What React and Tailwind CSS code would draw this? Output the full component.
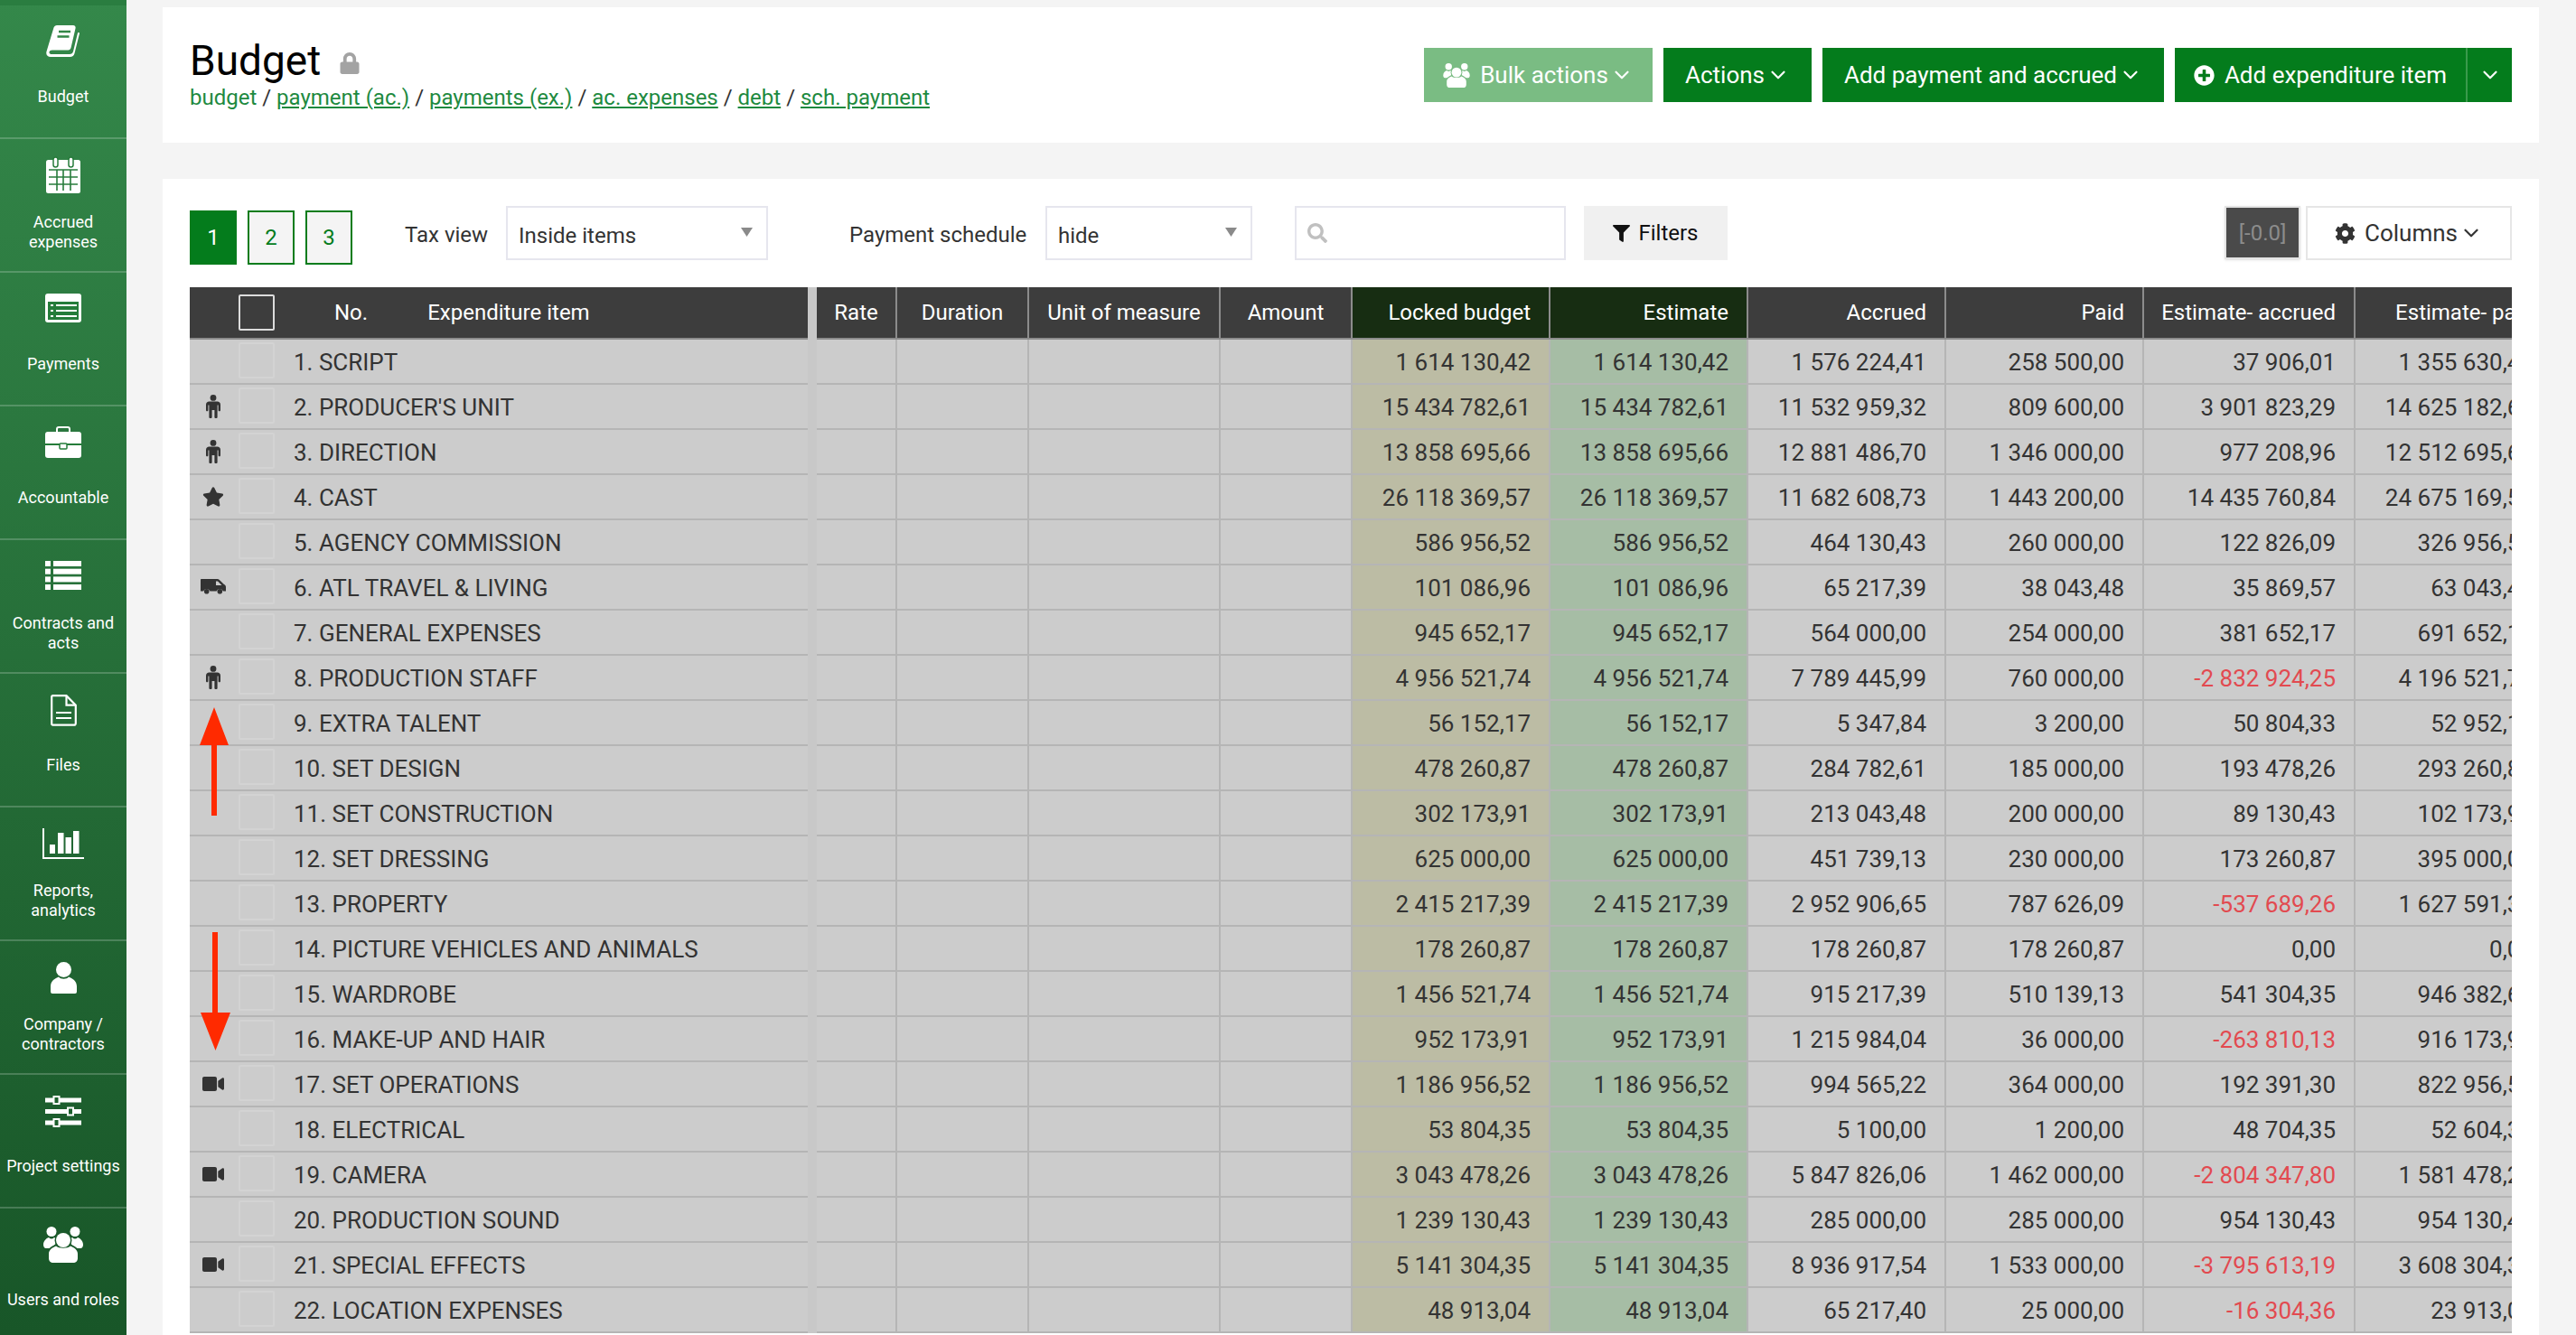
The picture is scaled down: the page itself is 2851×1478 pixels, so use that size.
import React from "react";
import { ChevronDown } from "lucide-react";
import { FaCog, FaFilter, FaLock, FaPlusCircle, FaSearch, FaStar, FaVideo } from "react-icons/fa";

const BookIcon = () => (
  <svg width="38" height="35" viewBox="0 0 38 35" fill="none">
    <path d="M8.5 2.5C9 1 10.5 0 12 0h18c2 0 3 1.5 2.5 3.5L27.5 25c-.5 1.5-1.5 2.5-3 2.5H7c-2.5 0-3.5 1-3.5 2.5S4.5 32 7 32h19c2 0 3.500-1 4-3l5-20.500c.2-.8 2.200-.5 2 .5L31.500 31c-.5 2.500-2.500 4-5 4H5c-3.500 0-5.500-2.500-4.500-6Z" fill="#fff" />
    <path d="M14 7h13M12.500 12.500h13" stroke="#338646" strokeWidth="2.500" />
  </svg>
);

const CalendarIcon = () => (
  <svg width="38" height="41" viewBox="0 0 38 41" fill="none">
    <rect x="0" y="4" width="38" height="37" rx="2.500" fill="#fff" />
    <path d="M3 15h32M3 23h32M3 31h32M12 15v23M19 15v23M27 15v23" stroke="#287c3c" strokeWidth="1.600" />
    <rect x="8" y="1" width="5" height="11" rx="2.500" fill="#fff" stroke="#287c3c" strokeWidth="1.500" />
    <rect x="25" y="1" width="5" height="11" rx="2.500" fill="#fff" stroke="#287c3c" strokeWidth="1.500" />
  </svg>
);

const PaymentsIcon = () => (
  <svg width="40" height="32" viewBox="0 0 40 32" fill="none">
    <rect width="40" height="32" rx="3" fill="#fff" />
    <rect x="3" y="9" width="34" height="20" fill="#257c3a" />
    <path d="M6 13h3M12 13h23M6 19h3M12 19h23M6 25h3M12 25h23" stroke="#fff" strokeWidth="2.200" />
  </svg>
);

const BriefcaseIcon = () => (
  <svg width="40" height="35" viewBox="0 0 40 35" fill="none">
    <rect x="13" y="1" width="14" height="8" rx="2" stroke="#fff" strokeWidth="2" />
    <rect y="6" width="40" height="29" rx="3" fill="#fff" />
    <rect y="19" width="40" height="2" fill="#257c3a" />
    <rect x="16" y="19" width="8" height="6" rx="1" fill="#fff" stroke="#257c3a" strokeWidth="1.500" />
  </svg>
);

const ListIcon = () => (
  <svg width="40" height="32" viewBox="0 0 40 32" fill="#fff">
    <rect y="0" width="6" height="6" />
    <rect x="9" y="0" width="31" height="6" />
    <rect y="8.700" width="6" height="6" />
    <rect x="9" y="8.700" width="31" height="6" />
    <rect y="17.400" width="6" height="6" />
    <rect x="9" y="17.400" width="31" height="6" />
    <rect y="26" width="6" height="6" />
    <rect x="9" y="26" width="31" height="6" />
  </svg>
);

const FileIcon = () => (
  <svg width="29" height="35" viewBox="0 0 29 35" fill="none" stroke="#fff" strokeWidth="2.200">
    <path d="M2.500 1.200h15l10.300 10.500v20c0 1.200-.8 2-2 2H2.500c-.8 0-1.300-.6-1.300-1.500V2.700c0-.9.500-1.500 1.300-1.500Z" />
    <path d="M17.500 1.200v10.500h10.300M6 20h17M6 26h17" />
  </svg>
);

const ChartIcon = () => (
  <svg width="46" height="35" viewBox="0 0 46 35" fill="#fff">
    <path d="M0 0h2v32h44v2H0Z" />
    <rect x="8" y="18" width="6" height="10" />
    <rect x="17" y="5" width="6.500" height="23" />
    <rect x="25.500" y="10" width="6.500" height="18" />
    <rect x="34" y="3" width="6.500" height="25" />
  </svg>
);

const UserIcon = () => (
  <svg width="29" height="35" viewBox="0 0 29 35" fill="#fff">
    <circle cx="14.500" cy="8.500" r="8.500" />
    <path d="M0 33V27C0 21 5 18 9 16.500C11 19.500 18 19.500 20 16.500C24 18 29 21 29 27V33Q29 35 27 35H2Q0 35 0 33Z" />
  </svg>
);

const SlidersIcon = () => (
  <svg width="40" height="35" viewBox="0 0 40 35">
    <path d="M0 5h40M0 17.500h40M0 30h40" stroke="#fff" strokeWidth="5" />
    <rect x="9.500" y="1" width="6" height="8" fill="#1c602c" stroke="#fff" strokeWidth="2" />
    <rect x="25" y="13.500" width="6" height="8" fill="#1c602c" stroke="#fff" strokeWidth="2" />
    <rect x="9.500" y="26" width="6" height="8" fill="#1c602c" stroke="#fff" strokeWidth="2" />
  </svg>
);

// three heads, the middle person sits on top of the two behind
const UsersIcon = ({ w = 44, h = 40, id = "u" }) => (
  <svg width={w} height={h} viewBox="0 0 44 40" fill="currentColor">
    <mask id={id}>
      <rect width="44" height="40" fill="#fff" />
      <circle cx="22" cy="15" r="9.500" fill="#000" />
      <path d="M4 40V30C4 24 10 21 14 20h16c4 1 10 4 10 10v10Z" fill="#000" />
    </mask>
    <g mask={`url(#${id})`}>
      <circle cx="9" cy="5.500" r="5.500" />
      <circle cx="35" cy="5.500" r="5.500" />
      <path d="M0 20c0-4 3-7 6-8 2 2 4 2 6 0 2 1 4 3 4 5l-8 7H3c-2 0-3-2-3-4Z" />
      <path d="M44 20c0-4-3-7-6-8-2 2-4 2-6 0-2 1-4 3-4 5l8 7h5c2 0 3-2 3-4Z" />
    </g>
    <circle cx="22" cy="15" r="8" />
    <path d="M6 35v-5c0-4 4-7 8-8.500 3 3 13 3 16 0 4 1.500 8 4.500 8 8.500v5c0 3-2 5-5 5H11c-3 0-5-2-5-5Z" />
  </svg>
);

const MaleIcon = () => (
  <svg width="16" height="26" viewBox="0 0 16 26" fill="#333">
    <circle cx="8" cy="3.400" r="3.400" />
    <path d="M3.500 7.500h9c2 0 3.500 1.500 3.500 3.500v6c0 .8-.5 1.300-1.200 1.300S13.600 17.800 13.600 17v-5.500h-1V25c0 .7-.7 1-1.600 1s-1.600-.3-1.600-1V17H6.600v8c0 .7-.7 1-1.600 1s-1.600-.3-1.600-1V11.500h-1V17c0 .8-.5 1.300-1.200 1.300S0 17.800 0 17v-6c0-2 1.500-3.500 3.500-3.500Z" />
  </svg>
);

const VanIcon = () => (
  <svg width="28" height="17" viewBox="0 0 28 17" fill="#333">
    <path fillRule="evenodd" d="M1 0h17.500c1 0 1.700.4 2.300 1L26 6c1.300.6 2 1.600 2 3v4.500h-3a4 4 0 0 0-7.500 0h-7a4 4 0 0 0-7.500 0H0V1c0-.6.400-1 1-1Zm16 2.500V7h6.500l-4.500-4.500Z" />
    <circle cx="6.700" cy="13.800" r="2.800" />
    <circle cx="21.300" cy="13.800" r="2.800" />
  </svg>
);

const navItems = [
  { label: "Budget", icon: <BookIcon />, gap: "mt-[6px]" },
  { label: "Accrued expenses", icon: <CalendarIcon />, gap: "mt-[8px]" },
  { label: "Payments", icon: <PaymentsIcon />, gap: "mt-[6px]" },
  { label: "Accountable", icon: <BriefcaseIcon />, gap: "mt-[6px]" },
  { label: "Contracts and acts", icon: <ListIcon />, gap: "mt-[8px]" },
  { label: "Files", icon: <FileIcon />, gap: "mt-[6px]", nudge: "mt-[3px]" },
  { label: "Reports, analytics", icon: <ChartIcon />, gap: "mt-[8px]", nudge: "mt-[2px]" },
  { label: "Company / contractors", icon: <UserIcon />, gap: "mt-[8px]", nudge: "mt-[2px]" },
  { label: "Project settings", icon: <SlidersIcon />, gap: "mt-[6px]", nudge: "mt-[2px]" },
  { label: "Users and roles", icon: <UsersIcon id="nav-users" />, gap: "mt-[6px]", nudge: "mt-[2px]" },
];

const columns = [
  { title: "Rate", w: "w-[89px]", align: "justify-center" },
  { title: "Duration", w: "w-[146px]", align: "justify-center" },
  { title: "Unit of measure", w: "w-[212px]", align: "justify-center" },
  { title: "Amount", w: "w-[146px]", align: "justify-center" },
  { title: "Locked budget", w: "w-[219px]", align: "justify-end", head: "bg-[#172d12]", cell: "bg-[#bcbca4]" },
  { title: "Estimate", w: "w-[219px]", align: "justify-end", head: "bg-[#172d12]", cell: "bg-[#a6bda5]" },
  { title: "Accrued", w: "w-[219px]", align: "justify-end" },
  { title: "Paid", w: "w-[219px]", align: "justify-end" },
  { title: "Estimate- accrued", w: "w-[234px]", align: "justify-end" },
  { title: "Estimate- paid", w: "w-[219px]", align: "justify-end" },
];

const male = <MaleIcon />;
const video = <FaVideo size={24} />;

// name, icon, estimate, accrued, paid, estimate-accrued, estimate-paid
const rows = [
  ["1. SCRIPT", null, "1 614 130,42", "1 576 224,41", "258 500,00", "37 906,01", "1 355 630,42"],
  ["2. PRODUCER'S UNIT", male, "15 434 782,61", "11 532 959,32", "809 600,00", "3 901 823,29", "14 625 182,61"],
  ["3. DIRECTION", male, "13 858 695,66", "12 881 486,70", "1 346 000,00", "977 208,96", "12 512 695,66"],
  ["4. CAST", <FaStar size={24} />, "26 118 369,57", "11 682 608,73", "1 443 200,00", "14 435 760,84", "24 675 169,57"],
  ["5. AGENCY COMMISSION", null, "586 956,52", "464 130,43", "260 000,00", "122 826,09", "326 956,52"],
  ["6. ATL TRAVEL & LIVING", <VanIcon />, "101 086,96", "65 217,39", "38 043,48", "35 869,57", "63 043,48"],
  ["7. GENERAL EXPENSES", null, "945 652,17", "564 000,00", "254 000,00", "381 652,17", "691 652,17"],
  ["8. PRODUCTION STAFF", male, "4 956 521,74", "7 789 445,99", "760 000,00", "-2 832 924,25", "4 196 521,74"],
  ["9. EXTRA TALENT", null, "56 152,17", "5 347,84", "3 200,00", "50 804,33", "52 952,17"],
  ["10. SET DESIGN", null, "478 260,87", "284 782,61", "185 000,00", "193 478,26", "293 260,87"],
  ["11. SET CONSTRUCTION", null, "302 173,91", "213 043,48", "200 000,00", "89 130,43", "102 173,91"],
  ["12. SET DRESSING", null, "625 000,00", "451 739,13", "230 000,00", "173 260,87", "395 000,00"],
  ["13. PROPERTY", null, "2 415 217,39", "2 952 906,65", "787 626,09", "-537 689,26", "1 627 591,30"],
  ["14. PICTURE VEHICLES AND ANIMALS", null, "178 260,87", "178 260,87", "178 260,87", "0,00", "0,00"],
  ["15. WARDROBE", null, "1 456 521,74", "915 217,39", "510 139,13", "541 304,35", "946 382,61"],
  ["16. MAKE-UP AND HAIR", null, "952 173,91", "1 215 984,04", "36 000,00", "-263 810,13", "916 173,91"],
  ["17. SET OPERATIONS", video, "1 186 956,52", "994 565,22", "364 000,00", "192 391,30", "822 956,52"],
  ["18. ELECTRICAL", null, "53 804,35", "5 100,00", "1 200,00", "48 704,35", "52 604,35"],
  ["19. CAMERA", video, "3 043 478,26", "5 847 826,06", "1 462 000,00", "-2 804 347,80", "1 581 478,26"],
  ["20. PRODUCTION SOUND", null, "1 239 130,43", "285 000,00", "285 000,00", "954 130,43", "954 130,43"],
  ["21. SPECIAL EFFECTS", video, "5 141 304,35", "8 936 917,54", "1 533 000,00", "-3 795 613,19", "3 608 304,35"],
  ["22. LOCATION EXPENSES", null, "48 913,04", "65 217,40", "25 000,00", "-16 304,36", "23 913,04"],
];

const Sidebar = () => (
  <aside className="w-[140px] shrink-0 h-full overflow-hidden text-white bg-gradient-to-b from-[#34884a] to-[#185628]">
    <div className="h-[6px] bg-[#2a7d40]" />
    {navItems.map((item) => (
      <div key={item.label} className="h-[148px] border-b-2 border-white/20 flex flex-col items-center pt-[14px]">
        <div className="h-[50px] flex items-center justify-center">
          <div className={item.nudge}>{item.icon}</div>
        </div>
        <div className={`h-[62px] flex items-center justify-center text-center text-[18px] leading-[22px] px-1 ${item.gap}`}>
          {item.label}
        </div>
      </div>
    ))}
  </aside>
);

const Btn = ({ className, children }) => (
  <div className={`h-[60px] flex items-center text-[26px] text-white ${className}`}>{children}</div>
);

const Caret = () => <ChevronDown size={26} strokeWidth={2} className="ml-[2px]" />;

const SelectBox = ({ value, w }) => (
  <div className={`h-[60px] border-2 border-[#e6e6ee] flex items-center justify-between pl-[12px] pr-[15px] ${w}`}>
    <span className="pt-[5px]">{value}</span>
    <svg width="13" height="10" viewBox="0 0 13 10" fill="#8a8a8a" className="-mt-[3px]">
      <path d="M0 0h13L6.500 10Z" />
    </svg>
  </div>
);

const Header = () => (
  <div className="flex h-[58px] text-white text-[24px]">
    <div className="w-[684px] shrink-0 bg-[#3d3d3d] border-b-2 border-[#8c8c8c] flex items-center pl-[54px]">
      <div className="w-[40px] h-[40px] border-2 border-[#dcdcdc] rounded-[2px]" />
      <span className="ml-[66px]">No.</span>
      <span className="ml-[66px]">Expenditure item</span>
    </div>
    <div className="w-[10px] shrink-0 bg-[#c8c8c8]" />
    {columns.map((c) => (
      <div
        key={c.title}
        className={`${c.w} shrink-0 flex items-center px-[20px] whitespace-nowrap border-r-2 border-b-2 border-r-[#8c8c8c] border-b-[#8c8c8c] ${c.align} ${c.head || "bg-[#3d3d3d]"}`}
      >
        {c.title}
      </div>
    ))}
  </div>
);

const Row = ({ name, icon, values }) => (
  <div className="flex h-[50px] text-[26px] text-[#333]">
    <div className="w-[684px] shrink-0 pt-[2px] bg-[#ccc] border-b-2 border-[#b5b5b5] flex items-center">
      <div className="w-[52px] flex justify-center -mt-[3px]">{icon}</div>
      <div className="w-[40px] h-[40px] ml-[2px] mb-[4px] border-2 border-[#d3d3d3] rounded-[2px]" />
      <span className="ml-[21px]">{name}</span>
    </div>
    <div className="w-[10px] shrink-0 bg-[#c8c8c8]" />
    {columns.map((c, i) => {
      const text = i < 4 ? "" : values[i - 4];
      return (
        <div
          key={c.title}
          className={`${c.w} shrink-0 flex items-center justify-end pt-[2px] pr-[20px] whitespace-nowrap border-r-2 border-b-2 border-[#b5b5b5] ${c.cell || "bg-[#ccc]"} ${text.startsWith("-") ? "text-[#e24a50]" : ""}`}
        >
          {text}
        </div>
      );
    })}
  </div>
);

export default function App() {
  return (
    <div className="h-screen w-full flex overflow-hidden bg-[#f4f4f4] font-['Roboto',sans-serif]">
      <Sidebar />

      <main className="flex-1 min-w-0 pl-[40px] pr-[41px] pt-[8px]">
        {/* Title card */}
        <div className="h-[150px] bg-white pl-[30px] pr-[30px] flex justify-between">
          <div className="pt-[32px]">
            <div className="flex items-center h-[54px] text-[46px] text-black">
              Budget
              <FaLock size={24} className="ml-[20px] mt-[6px] text-[#a3a3a3]" />
            </div>
            <div className="text-[24px] leading-[28px] text-[#333]">
              <span className="text-[#1e8a3f]">budget</span> /{" "}
              <span className="text-[#1e8a3f] underline">payment (ac.)</span> /{" "}
              <span className="text-[#1e8a3f] underline">payments (ex.)</span> /{" "}
              <span className="text-[#1e8a3f] underline">ac. expenses</span> /{" "}
              <span className="text-[#1e8a3f] underline">debt</span> /{" "}
              <span className="text-[#1e8a3f] underline">sch. payment</span>
            </div>
          </div>
          <div className="pt-[45px] flex gap-[12px]">
            <Btn className="w-[253px] justify-center bg-[#7abc83]">
              <span className="mr-[11px]">
                <UsersIcon w={30} h={27} id="bulk-users" />
              </span>
              Bulk actions
              <Caret />
            </Btn>
            <Btn className="w-[164px] justify-center bg-[#047c1c]">
              Actions
              <Caret />
            </Btn>
            <Btn className="w-[378px] justify-center bg-[#047c1c]">
              Add payment and accrued
              <Caret />
            </Btn>
            <Btn className="w-[373px] bg-[#047c1c]">
              <div className="w-[324px] h-full flex items-center justify-center border-r-2 border-[#3a9a4c]">
                <FaPlusCircle size={23} className="mr-[11px]" />
                Add expenditure item
              </div>
              <div className="flex-1 flex justify-center">
                <ChevronDown size={26} strokeWidth={2} />
              </div>
            </Btn>
          </div>
        </div>

        {/* Table card */}
        <div className="mt-[40px] h-[1400px] bg-white pl-[30px] pr-[30px] pt-[30px] text-[24px] text-[#333]">
          <div className="flex h-[60px]">
            <div className="flex gap-[12px] mt-[5px]">
              <div className="w-[52px] h-[60px] flex items-center justify-center bg-[#047c1c] text-white">1</div>
              <div className="w-[52px] h-[60px] flex items-center justify-center bg-[#f4f4f4] border-2 border-[#047c1c] text-[#047c1c]">2</div>
              <div className="w-[52px] h-[60px] flex items-center justify-center bg-[#f4f4f4] border-2 border-[#047c1c] text-[#047c1c]">3</div>
            </div>
            <div className="ml-[58px] w-[112px] flex items-center pt-[3px]">Tax view</div>
            <SelectBox value="Inside items" w="w-[290px]" />
            <div className="ml-[90px] w-[217px] flex items-center pt-[3px]">Payment schedule</div>
            <SelectBox value="hide" w="w-[229px]" />
            <div className="ml-[47px] w-[300px] h-[60px] border-2 border-[#e6e6ee] flex items-center pl-[12px]">
              <FaSearch size={22} className="text-[#c0c0c0]" />
            </div>
            <div className="ml-[20px] w-[159px] flex items-center justify-center bg-[#f0f0f0] text-[#111]">
              <FaFilter size={19} className="mr-[9px]" />
              Filters
            </div>
            <div className="ml-auto flex gap-[6px]">
              <div className="w-[84px] h-[59px] flex items-center justify-center bg-[#4a4a4a] border-2 border-[#e4e4e4] shadow-sm text-[#8c8c8c]">
                [-0.0]
              </div>
              <div className="w-[228px] h-[60px] flex items-center justify-center border-2 border-[#e6e6e6] text-[26px] text-[#333]">
                <FaCog size={23} className="mr-[10px]" />
                Columns
                <ChevronDown size={26} strokeWidth={2} className="ml-[2px]" />
              </div>
            </div>
          </div>

          <div className="relative mt-[30px] w-[2570px] overflow-hidden">
            <Header />
            {rows.map(([name, icon, estimate, accrued, paid, a, b]) => (
              <Row key={name} name={name} icon={icon} values={[estimate, estimate, accrued, paid, a, b]} />
            ))}

            {/* red arrows drawn over the rows */}
            <svg width="32" height="121" viewBox="0 0 32 121" className="absolute left-[11px] top-[465px]" fill="#ff2a00">
              <path d="M16 0 32 42H19V120H13V42H0Z" />
            </svg>
            <svg width="33" height="131" viewBox="0 0 33 131" className="absolute left-[12px] top-[714px]" fill="#ff2a00">
              <path d="M13 0h6v89h14L16.500 131 0 89h13Z" />
            </svg>
          </div>
        </div>
      </main>
    </div>
  );
}
